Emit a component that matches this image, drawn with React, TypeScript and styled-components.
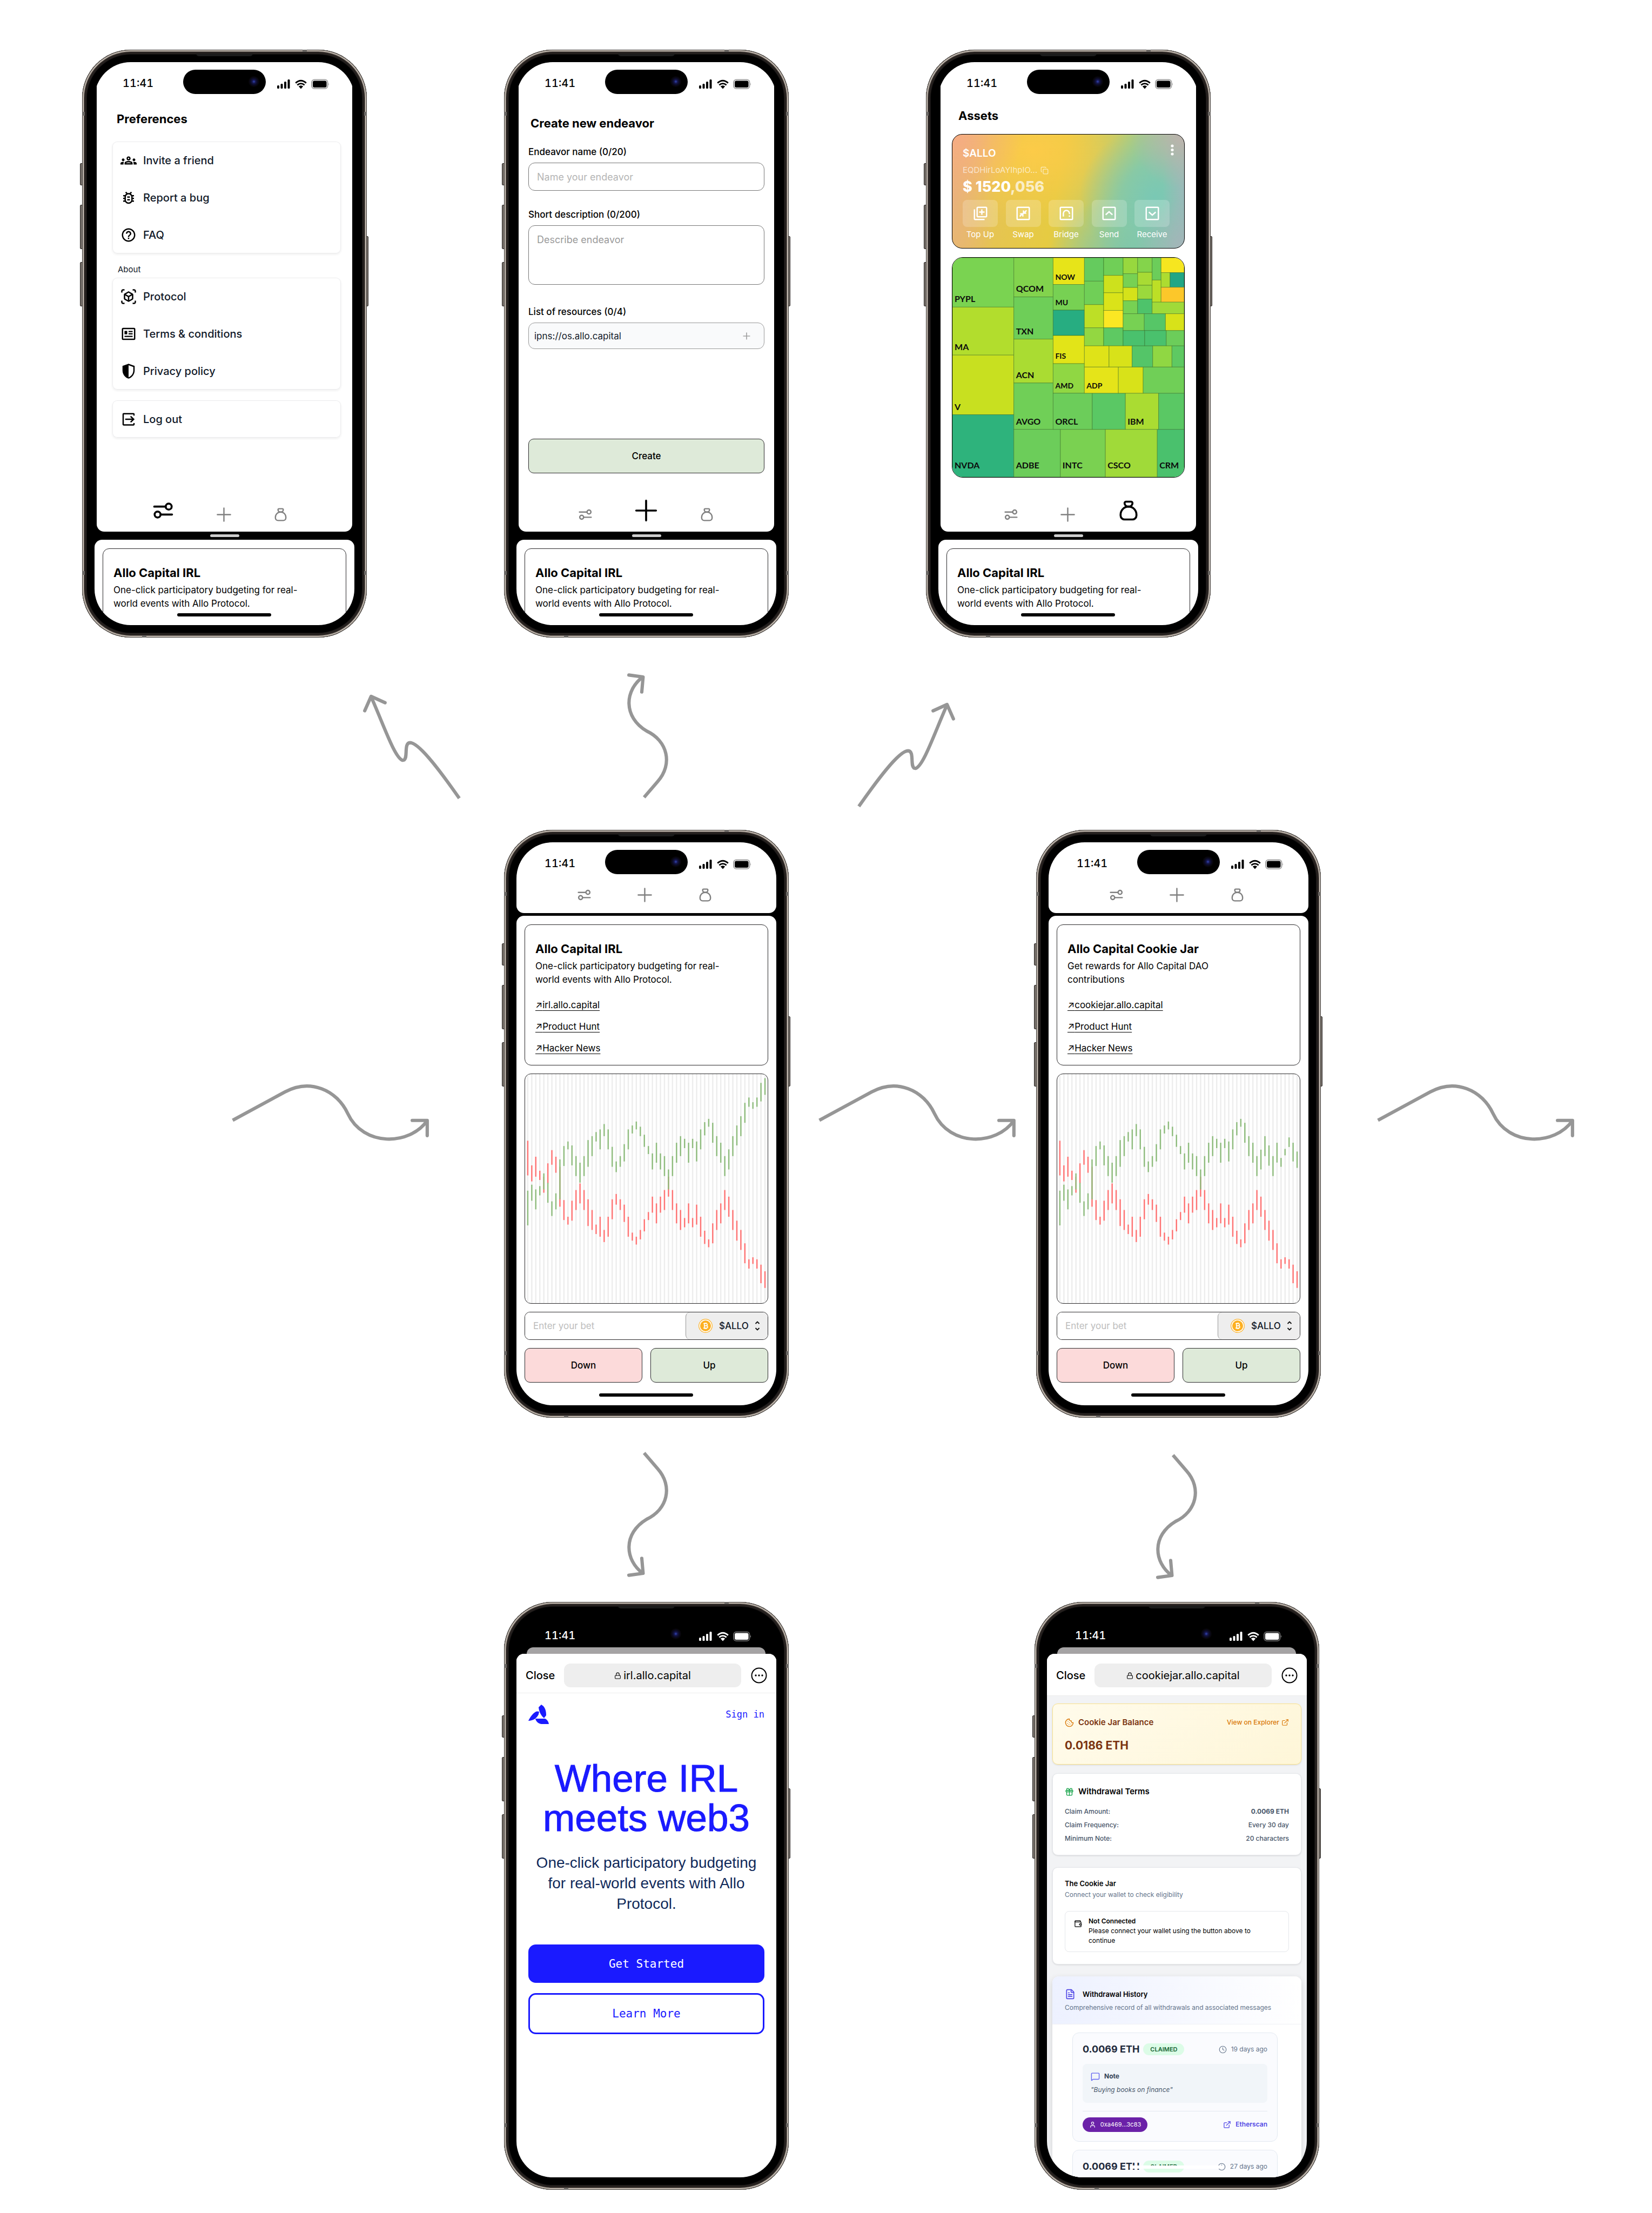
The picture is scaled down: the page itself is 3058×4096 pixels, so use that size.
import React from 'react';
import styled, { createGlobalStyle, css } from 'styled-components';
import {
  Clock,
  Cookie,
  Copy,
  ExternalLink,
  FileText,
  Gift,
  Lock,
  MessageSquare,
  Plus,
  User,
  Wallet,
} from 'lucide-react';
import {
  MdHelpOutline,
  MdOutlineBugReport,
  MdOutlineGroups,
  MdOutlineLibraryAdd,
  MdOutlineViewInAr,
} from 'react-icons/md';

const sans = `Inter, "Liberation Sans", sans-serif`;
const grotesk = `"Liberation Sans", Arial, sans-serif`;
const mono = `"DejaVu Sans Mono", monospace`;
const ink = '#111928';
const line = '#2b2a2c';
const blue = '#1a1aff';

const GlobalStyle = createGlobalStyle`
  *, *::before, *::after { box-sizing: border-box; }
  body { margin: 0; background: #fff; color: #000; font-family: ${sans}; }
  h1, h2, h3, p, ul, dl, dd { margin: 0; padding: 0; }
  ul { list-style: none; }
  button, input, textarea, select { font: inherit; color: inherit; margin: 0; }
  svg { display: block; flex: none; }
`;

/* ---------- board ---------- */

const Board = styled.main`
  min-height: 100vh;
  padding: 92px 0 43px;
  overflow: hidden;
`;

const PhoneRow = styled.section<{ $columns: string; $start: number }>`
  display: grid;
  grid-template-columns: ${(p) => p.$columns};
  padding-left: ${(p) => p.$start}px;
  align-items: start;
`;

const ArrowRow = styled.div<{ $height: number; $start: number }>`
  display: flex;
  align-items: flex-start;
  height: ${(p) => p.$height}px;
  padding-left: ${(p) => p.$start}px;
`;

const Arrow = styled.svg<{ $top: number; $gap?: number }>`
  margin-top: ${(p) => p.$top}px;
  margin-left: ${(p) => p.$gap ?? 0}px;
  fill: none;
  stroke: #969696;
  stroke-width: 10;
  stroke-linejoin: round;
`;

function WaveArrow() {
  return (
    <Arrow $top={469} width="370" height="111" viewBox="692 3250 600 180" aria-hidden="true">
      <path d="M698 3361L855 3276C930 3235 1010 3270 1043 3340C1090 3442 1230 3437 1282 3362" />
      <path strokeLinecap="round" d="M1237 3361.500H1282V3407" />
    </Arrow>
  );
}

function CurlArrow({ top, gap, down }: { top: number; gap?: number; down?: boolean }) {
  return (
    <Arrow $top={top} $gap={gap} width="89" height="244" viewBox="1870 2010 145 395" aria-hidden="true">
      <g transform={down ? 'translate(0 4415) scale(1 -1)' : undefined}>
        <path d="M1934 2393L1975 2345C2022 2292 2004 2222 1942 2193C1870 2150 1875 2070 1931 2029" />
        <path strokeLinecap="round" d="M1888 2024L1931 2030L1927 2075" />
      </g>
    </Arrow>
  );
}

function ZigArrow({ top, gap, mirrored }: { top: number; gap?: number; mirrored?: boolean }) {
  return (
    <Arrow $top={top} $gap={gap} width="188" height="204" viewBox="1085 2075 305 330" aria-hidden="true">
      <g transform={mirrored ? 'translate(2475 0) scale(-1 1)' : undefined}>
        <path d="M1114 2090C1150 2170 1185 2275 1209 2281C1228 2281 1210 2229 1231 2228C1260 2228 1330 2325 1379 2395" />
        <path strokeLinecap="round" d="M1095 2132L1114 2089L1156 2108" />
      </g>
    </Arrow>
  );
}

/* ---------- phone shell ---------- */

const Body = styled.article`
  position: relative;
  width: 527px;
  height: 1088px;
  padding: 23px;
  border-radius: 90px;
  background: #000;
  box-shadow: inset 0 0 0 1px #3b3835, inset 0 0 0 3px #c3bab1, inset 0 0 0 4px #6f6760,
    inset 0 0 0 8px #26211f, inset 0 0 0 9px #141212;
`;

const SideKey = styled.span<{ $side: 'left' | 'right'; $top: number; $height: number }>`
  position: absolute;
  z-index: -1;
  top: ${(p) => p.$top}px;
  ${(p) => p.$side}: ${(p) => (p.$side === 'left' ? -4 : -3)}px;
  width: 8px;
  height: ${(p) => p.$height}px;
  border: 1px solid #2a2624;
  border-radius: 2px;
  background: #77706a;
`;

const Band = styled.span<{ $x?: 'left' | 'right'; $y?: 'top' | 'bottom'; $at: number }>`
  position: absolute;
  background: #6b6865;
  ${(p) =>
    p.$x
      ? css`
          ${p.$x}: 0;
          top: ${p.$at}px;
          width: 5px;
          height: 7px;
        `
      : css`
          ${p.$y === 'top' ? 'top' : 'bottom'}: 0;
          left: ${p.$at}px;
          width: 8px;
          height: 4px;
        `}
`;

const Earpiece = styled.span`
  position: absolute;
  top: 7px;
  left: 211px;
  width: 105px;
  height: 5px;
  border-radius: 0 0 5px 5px;
  background: #1c1c1c;
`;

const Screen = styled.div`
  position: relative;
  display: flex;
  flex-direction: column;
  height: 100%;
  border-radius: 67px;
  background: #000;
  overflow: hidden;
`;

const StatusBar = styled.div<{ $light?: boolean }>`
  position: absolute;
  z-index: 2;
  inset: 14px 0 auto 0;
  display: flex;
  align-items: center;
  height: 45px;
  padding: 0 46px 0 52px;
  color: ${(p) => (p.$light ? '#fff' : '#000')};
`;

const Time = styled.span`
  width: 112px;
  padding-top: 5px;
  font-size: 20px;
  line-height: 24px;
  font-weight: 500;
  font-variant-numeric: tabular-nums;
`;

const Island = styled.span`
  position: relative;
  width: 153px;
  height: 45px;
  border-radius: 23px;
  background: #000;
  &::after {
    content: '';
    position: absolute;
    top: 12px;
    right: 12px;
    width: 20px;
    height: 20px;
    border-radius: 50%;
    background: radial-gradient(circle, #2c3a9a 0 1px, #16174f 3px, #0b0b26 6px, #070509 9px);
  }
`;

const Signals = styled.svg`
  margin: 8px 0 0 auto;
`;

const HomeBar = styled.span<{ $light?: boolean }>`
  position: absolute;
  z-index: 2;
  bottom: 16px;
  left: 50%;
  width: 174px;
  height: 6px;
  margin-left: -88px;
  border-radius: 3px;
  background: ${(p) => (p.$light ? '#fff' : '#000')};
`;

function Phone({ dark, children }: { dark?: boolean; children: React.ReactNode }) {
  return (
    <Body>
      <SideKey $side="left" $top={210} $height={41} />
      <SideKey $side="left" $top={287} $height={82} />
      <SideKey $side="left" $top={393} $height={82} />
      <SideKey $side="right" $top={345} $height={130} />
      <Band $y="top" $at={408} />
      <Band $y="bottom" $at={111} />
      <Band $x="left" $at={115} />
      <Band $x="right" $at={115} />
      <Band $x="left" $at={965} />
      <Band $x="right" $at={965} />
      <Earpiece />
      <Screen>
        {children}
        <StatusBar $light={dark}>
          <Time>11:41</Time>
          <Island />
          <Signals width="97" height="20" viewBox="0 0 97 20" fill="currentColor" aria-hidden="true">
            <rect x="0" y="12" width="4" height="6" rx="1.500" />
            <rect x="6.500" y="9" width="4" height="9" rx="1.500" />
            <rect x="13" y="5" width="4" height="13" rx="1.500" />
            <rect x="19.500" y="1" width="4" height="17" rx="1.500" />
            <path d="M44 18.500L39.800 13.800Q44 10.600 48.200 13.800Z" />
            <g fill="none" stroke="currentColor" strokeWidth="2.800">
              <path d="M37.300 11.400Q44 5.800 50.700 11.400" />
              <path d="M34.200 7.600Q44 -1 53.800 7.600" />
            </g>
            <rect x="64" y="1.500" width="29.500" height="16.500" rx="5" fill="none" stroke="#a3a3a3" strokeWidth="2" opacity={dark ? 0.6 : 1} />
            <rect x="66" y="3.500" width="25.500" height="12.500" rx="3" />
            <path d="M95 7.500q2 2.250 0 4.500z" fill="#a3a3a3" />
          </Signals>
        </StatusBar>
        <HomeBar $light={dark} />
      </Screen>
    </Body>
  );
}

/* ---------- shared app parts ---------- */

const Pane = styled.section<{ $inset?: boolean }>`
  display: flex;
  flex-direction: column;
  flex: 1;
  min-height: 0;
  margin: 0 ${(p) => (p.$inset ? 4 : 0)}px;
  border-radius: 0 0 14px 14px;
  background: #fff;
`;

const Feed = styled.section<{ $peek?: boolean }>`
  display: flex;
  flex-direction: column;
  gap: 15px;
  flex: none;
  height: ${(p) => (p.$peek ? 158 : 906)}px;
  padding: 16px 15px 0;
  border-radius: 14px 14px 0 0;
  background: #fff;
  overflow: hidden;
`;

const Grip = styled.div`
  flex: none;
  display: flex;
  align-items: center;
  justify-content: center;
  height: 15px;
  &::before {
    content: '';
    width: 54px;
    height: 5px;
    border-radius: 3px;
    background: #cfcfcf;
  }
`;

const Seam = styled.div`
  flex: none;
  height: 5px;
`;

const TabBar = styled.nav<{ $gap: number; $pad: string }>`
  display: grid;
  grid-template-columns: 1fr auto 1fr;
  align-items: end;
  gap: ${(p) => p.$gap}px;
  margin-top: auto;
  padding: ${(p) => p.$pad};
  & > :first-child { justify-self: end; }
`;

const Tab = styled.button<{ $on?: boolean }>`
  width: ${(p) => (p.$on ? 44 : 29)}px;
  height: ${(p) => (p.$on ? 44 : 29)}px;
  padding: 0;
  border: 0;
  background: none;
  color: ${(p) => (p.$on ? '#000' : '#808080')};
  svg {
    width: 100%;
    height: 100%;
    fill: none;
    stroke: currentColor;
    stroke-width: 2;
    stroke-linecap: round;
    stroke-linejoin: round;
  }
`;

function Tabs({ active, top }: { active?: number; top?: boolean }) {
  return (
    <TabBar $gap={top ? 83 : 76} $pad={top ? '0 7px 19px 0' : '0 2px 17px 0'} aria-label="Sections">
      <Tab type="button" $on={active === 0} aria-label="Preferences">
        <svg viewBox="0 0 24 24">
          <path d="M3 8h11.500M21 16H9.500" />
          <circle cx="17.600" cy="8" r="3" />
          <circle cx="6.400" cy="16" r="3" />
        </svg>
      </Tab>
      <Tab type="button" $on={active === 1} aria-label="Create">
        <svg viewBox="0 0 24 24">
          <path d="M12 2v20M2 12h20" />
        </svg>
      </Tab>
      <Tab type="button" $on={active === 2} aria-label="Assets">
        <svg viewBox="0 0 24 24">
          <path d="M9.500 3h5a1.500 1.500 0 0 1 1.500 1.500a3.500 3.500 0 0 1-3.500 3.500h-1a3.500 3.500 0 0 1-3.500-3.500a1.500 1.500 0 0 1 1.500-1.500z" />
          <path d="M4 17v-1a8 8 0 1 1 16 0v1a4 4 0 0 1-4 4h-8a4 4 0 0 1-4-4z" />
        </svg>
      </Tab>
    </TabBar>
  );
}

const Title = styled.h2<{ $indent?: number; $after?: number }>`
  padding-left: ${(p) => p.$indent ?? 0}px;
  margin-bottom: ${(p) => p.$after ?? 0}px;
  font-size: 22px;
  line-height: 28px;
  font-weight: 700;
`;

const InfoCard = styled.section`
  flex: none;
  min-height: 261px;
  padding: 30px 19px 0;
  border: 1px solid ${line};
  border-radius: 12px;
`;

const InfoText = styled.p`
  max-width: 360px;
  font-size: 17px;
  line-height: 25px;
`;

const LinkList = styled.ul`
  display: grid;
  gap: 16px;
  margin-top: 22px;
  font-size: 17px;
  line-height: 24px;
  a {
    color: #000;
    text-decoration: underline;
    text-decoration-thickness: 1px;
    text-underline-offset: 4px;
  }
`;

function Info({ title, text, links = [] }: { title: string; text: string; links?: string[] }) {
  return (
    <InfoCard>
      <Title $after={6}>{title}</Title>
      <InfoText>{text}</InfoText>
      {links.length > 0 && (
        <LinkList>
          {links.map((l) => (
            <li key={l}>
              <a href="#open">↗{l}</a>
            </li>
          ))}
        </LinkList>
      )}
    </InfoCard>
  );
}

const irlText = 'One-click participatory budgeting for real-world events with Allo Protocol.';

function Drawer() {
  return (
    <>
      <Grip />
      <Feed $peek>
        <Info title="Allo Capital IRL" text={irlText} />
      </Feed>
    </>
  );
}

/* ---------- preferences ---------- */

const PrefsBody = styled.div`
  padding: 91px 21px 0 29px;
`;

const Group = styled.ul`
  border-radius: 9px;
  box-shadow: inset 0 0 0 1px #ececee, 0 2px 4px rgba(0, 0, 0, 0.07);
  & + & { margin-top: 20px; }
`;

const Item = styled.button`
  display: flex;
  align-items: center;
  gap: 12px;
  width: 100%;
  height: 69px;
  padding: 0 15px;
  border: 0;
  background: none;
  color: ${ink};
  font-size: 20px;
  line-height: 24px;
  font-weight: 500;
  svg { width: 30px; height: 30px; color: #000; }
`;

const GroupLabel = styled.h3`
  margin: 20px 0 5px;
  padding-left: 10px;
  color: ${ink};
  font-size: 15px;
  line-height: 20px;
  font-weight: 400;
`;

const NewsIcon = () => (
  <svg viewBox="0 0 24 24" fill="currentColor" aria-hidden="true">
    <path fillRule="evenodd" d="M4 3h16a2 2 0 0 1 2 2v14a2 2 0 0 1-2 2H4a2 2 0 0 1-2-2V5a2 2 0 0 1 2-2zm0 2v14h16V5z" />
    <path d="M6 7.500h4v5H6zM12 7.500h6v1.800h-6zM12 11h6v1.800h-6zM6 14.800h12v1.800H6z" />
  </svg>
);

const ShieldIcon = () => (
  <svg viewBox="0 0 24 24" fill="currentColor" aria-hidden="true">
    <path d="M12 1L3 4.200V11c0 5.500 3.800 10.600 9 12 5.200-1.400 9-6.500 9-12V4.200zM12 3.200l7 2.500V11c0 4.500-3 8.700-7 9.900z" fillRule="evenodd" />
  </svg>
);

const ExitIcon = () => (
  <svg viewBox="0 0 24 24" fill="none" stroke="currentColor" strokeWidth="2" aria-hidden="true">
    <path d="M20 6.500V4.500a.8.8 0 0 0-.8-.8H4.800a.8.8 0 0 0-.8.8v15a.8.8 0 0 0 .8.8h14.400a.8.8 0 0 0 .8-.8v-2M7 12h12.500M15 7.700l4.500 4.300-4.500 4.300" />
  </svg>
);

function Preferences() {
  return (
    <Phone>
      <Pane $inset>
        <PrefsBody>
          <Title $indent={8} $after={28}>Preferences</Title>
          <Group>
            <li><Item type="button"><MdOutlineGroups />Invite a friend</Item></li>
            <li><Item type="button"><MdOutlineBugReport />Report a bug</Item></li>
            <li><Item type="button"><MdHelpOutline />FAQ</Item></li>
          </Group>
          <GroupLabel>About</GroupLabel>
          <Group>
            <li><Item type="button"><MdOutlineViewInAr />Protocol</Item></li>
            <li><Item type="button"><NewsIcon />Terms &amp; conditions</Item></li>
            <li><Item type="button"><ShieldIcon />Privacy policy</Item></li>
          </Group>
          <Group>
            <li><Item type="button"><ExitIcon />Log out</Item></li>
          </Group>
        </PrefsBody>
        <Tabs active={0} />
      </Pane>
      <Drawer />
    </Phone>
  );
}

/* ---------- create endeavor ---------- */

const CreateForm = styled.form`
  display: flex;
  flex-direction: column;
  flex: 1;
  padding: 99px 18px 47px;
`;

const Field = styled.div<{ $after: number }>`
  display: flex;
  flex-direction: column;
  gap: 9px;
  margin-bottom: ${(p) => p.$after}px;
  label {
    font-size: 17px;
    line-height: 22px;
    font-weight: 500;
  }
`;

const fieldBox = css`
  width: 100%;
  border: 1px solid #777;
  border-radius: 12px;
  background: #fff;
  outline: none;
  resize: none;
`;

const TextInput = styled.input`
  ${fieldBox}
  height: 52px;
  padding: 0 15px;
  font-size: 18px;
  &::placeholder { color: #b5b5b5; opacity: 1; }
`;

const TextBox = styled.textarea`
  ${fieldBox}
  display: block;
  height: 110px;
  padding: 14px 15px;
  font-size: 18px;
  line-height: 24px;
  &::placeholder { color: #9a9a9a; opacity: 1; }
`;

const ResourceBox = styled.div`
  ${fieldBox}
  display: flex;
  align-items: center;
  height: 49px;
  padding: 0 22px 0 10px;
  border-color: #999;
  background: #f9fafb;
  input {
    flex: 1;
    min-width: 0;
    padding: 0;
    border: 0;
    background: none;
    color: ${ink};
    font-size: 17px;
  }
  button {
    padding: 0;
    border: 0;
    background: none;
    color: #a0a0a0;
  }
`;

const ActionButton = styled.button<{ $tone: 'up' | 'down' }>`
  flex: 1;
  height: 64px;
  border: 1px solid ${line};
  border-radius: 10px;
  background: ${(p) => (p.$tone === 'up' ? '#deead9' : '#fcdada')};
  font-size: 17px;
  font-weight: 500;
`;

const FormFoot = styled.div`
  display: flex;
  margin-top: auto;
`;

function CreateEndeavor() {
  return (
    <Phone>
      <Pane $inset>
        <CreateForm>
          <Title $indent={4} $after={28}>Create new endeavor</Title>
          <Field $after={33}>
            <label htmlFor="name">Endeavor name (0/20)</label>
            <TextInput id="name" placeholder="Name your endeavor" />
          </Field>
          <Field $after={39}>
            <label htmlFor="about">Short description (0/200)</label>
            <TextBox id="about" placeholder="Describe endeavor" />
          </Field>
          <Field $after={0}>
            <label htmlFor="resource">List of resources (0/4)</label>
            <ResourceBox>
              <input id="resource" defaultValue="ipns://os.allo.capital" />
              <button type="button" aria-label="Add resource"><Plus size={20} strokeWidth={2} /></button>
            </ResourceBox>
          </Field>
          <FormFoot>
            <ActionButton type="button" $tone="up">Create</ActionButton>
          </FormFoot>
        </CreateForm>
        <Tabs active={1} />
      </Pane>
      <Drawer />
    </Phone>
  );
}

/* ---------- assets ---------- */

const AssetsBody = styled.div`
  padding: 85px 21px 0;
`;

const WalletCard = styled.section`
  position: relative;
  height: 212px;
  margin-bottom: 16px;
  padding: 23px 27px 0 19px;
  border: 1px solid #000;
  border-radius: 19px;
  color: #fff;
  background:
    radial-gradient(circle at 100% 0%, rgba(190, 178, 172, 1) 0, rgba(180, 185, 175, 0) 100px),
    radial-gradient(circle at 100% 100%, rgba(165, 180, 185, 1) 0, rgba(165, 180, 185, 0) 90px),
    radial-gradient(ellipse 40px 160px at 100% 50%, rgba(158, 184, 186, 0.9) 0, rgba(158, 184, 186, 0) 100%),
    radial-gradient(ellipse 140px 130px at 375px 115px, #7ac8b4 0, rgba(122, 200, 180, 0.7) 45%, rgba(122, 200, 180, 0) 100%),
    radial-gradient(ellipse 150px 110px at 330px 220px, #80c6a8 0, rgba(128, 198, 168, 0) 100%),
    radial-gradient(ellipse 130px 130px at 0 0, #f6ab85 0, rgba(246, 171, 133, 0) 100%),
    radial-gradient(ellipse 80px 260px at 0 120px, #e9b27c 0, rgba(233, 178, 124, 0) 100%),
    radial-gradient(ellipse 200px 130px at 150px 30px, #fccb48 0, rgba(252, 203, 72, 0) 100%),
    linear-gradient(100deg, #e5bd62 0, #e6cb42 45%, #a8cc84 75%, #8cc4b4 100%);
`;

const MoreButton = styled.button`
  position: absolute;
  top: 16px;
  right: 17px;
  width: 10px;
  height: 26px;
  padding: 0;
  border: 0;
  background: none;
`;

const Token = styled.h3`
  font-size: 19px;
  line-height: 24px;
  font-weight: 600;
`;

const Address = styled.p`
  display: flex;
  align-items: center;
  gap: 6px;
  margin-top: 10px;
  color: rgba(255, 255, 255, 0.65);
  font-size: 15px;
  line-height: 18px;
`;

const Amount = styled.p`
  margin: 5px 0 7px;
  font-size: 27px;
  line-height: 34px;
  font-weight: 800;
  span { color: rgba(255, 255, 255, 0.7); }
`;

const Actions = styled.ul`
  display: grid;
  grid-template-columns: repeat(5, 65px);
  justify-content: space-between;
  button {
    display: flex;
    flex-direction: column;
    align-items: center;
    gap: 5px;
    width: 100%;
    padding: 0;
    border: 0;
    background: none;
    font-size: 15px;
    line-height: 18px;
  }
`;

const Tile = styled.span`
  display: grid;
  place-items: center;
  width: 100%;
  height: 50px;
  border-radius: 8px;
  background: rgba(255, 255, 255, 0.2);
  svg { width: 30px; height: 30px; }
`;

const boxed = (d: string) => (
  <svg viewBox="0 0 24 24" fill="none" stroke="currentColor" strokeWidth="2" aria-hidden="true">
    <rect x="3" y="3" width="18" height="18" rx="1" />
    <path d={d} />
  </svg>
);

const actions: [string, React.ReactNode][] = [
  ['Top Up', <MdOutlineLibraryAdd key="t" />],
  ['Swap', boxed('M7 16.500l4-4M7.500 12.500h4v4M17 7.500l-4 4M16.500 11.500h-4v-4')],
  ['Bridge', boxed('M7.500 16.500V12a4.500 4.500 0 0 1 9 0v1M16.500 15v2')],
  ['Send', boxed('M7 14l5-4.500 5 4.500')],
  ['Receive', boxed('M7 10l5 4.500 5-4.500')],
];

type Cell = [number, number, number, number, string, string?, number?];

/* Cell edges on a 1215 x 795 grid. */
const cells: Cell[] = [
  [0, 0, 322, 179, '#7ad351', 'PYPL'],
  [0, 179, 322, 353, '#b2dd2d', 'MA'],
  [0, 353, 322, 569, '#c8e020', 'V'],
  [0, 569, 322, 795, '#2eb37c', 'NVDA'],
  [322, 0, 528, 142, '#82d34d', 'QCOM'],
  [322, 142, 528, 295, '#6ece58', 'TXN'],
  [322, 295, 528, 454, '#aadc32', 'ACN'],
  [322, 454, 528, 622, '#70cf57', 'AVGO'],
  [322, 622, 566, 795, '#6ccd5a', 'ADBE'],
  [566, 622, 802, 795, '#7ad151', 'INTC'],
  [802, 622, 1074, 795, '#a0da39', 'CSCO'],
  [1074, 622, 1215, 795, '#4ac16d', 'CRM'],
  [528, 0, 692, 97, '#e7e419', 'NOW', 14],
  [528, 97, 692, 190, '#77d153', 'MU', 14],
  [528, 190, 692, 282, '#27ad81'],
  [528, 282, 692, 384, '#e2e418', 'FIS', 14],
  [528, 384, 692, 491, '#90d743', 'AMD', 14],
  [528, 491, 733, 622, '#6ccd5a', 'ORCL'],
  [733, 491, 907, 622, '#5ac864'],
  [907, 491, 1081, 622, '#aadc32', 'IBM'],
  [1081, 491, 1215, 622, '#5ac864'],
  [692, 396, 870, 491, '#e5e419', 'ADP', 14],
  [870, 396, 1000, 491, '#d8e219'],
  [1000, 396, 1215, 491, '#70cf57'],
  [692, 319, 821, 396, '#dfe318'],
  [821, 319, 942, 396, '#d8e219'],
  [942, 319, 1050, 396, '#54c568'],
  [1050, 319, 1151, 396, '#90d743'],
  [1151, 319, 1215, 396, '#5ec962'],
  [692, 0, 793, 85, '#65cb5e'],
  [692, 85, 793, 170, '#70cf57'],
  [692, 170, 793, 254, '#bddf26'],
  [692, 254, 793, 319, '#93d741'],
  [793, 0, 895, 64, '#70cf57'],
  [793, 64, 895, 127, '#cde11d'],
  [793, 127, 895, 191, '#dae319'],
  [793, 191, 895, 254, '#fbe723'],
  [793, 254, 895, 319, '#5ec962'],
  [895, 0, 971, 58, '#98d83e'],
  [895, 58, 971, 108, '#77d153'],
  [895, 108, 971, 156, '#d5e21a'],
  [895, 156, 971, 203, '#77d153'],
  [971, 0, 1047, 53, '#84d44b'],
  [971, 53, 1047, 100, '#a8db34'],
  [971, 100, 1047, 150, '#9bd93c'],
  [971, 150, 1047, 203, '#4ec36b'],
  [1047, 0, 1094, 81, '#6ccd5a'],
  [1047, 81, 1094, 161, '#bddf26'],
  [1094, 0, 1215, 54, '#f6e620'],
  [1094, 54, 1141, 107, '#addc30'],
  [1141, 54, 1215, 107, '#21a685'],
  [1094, 107, 1215, 161, '#fcc72a'],
  [1047, 161, 1215, 203, '#a0da39'],
  [895, 203, 1006, 264, '#77d153'],
  [1006, 203, 1117, 264, '#56c667'],
  [1117, 203, 1215, 264, '#d8e219'],
  [895, 264, 1008, 319, '#4ac16d'],
  [1008, 264, 1121, 319, '#4ac16d'],
  [1121, 264, 1215, 319, '#6ccd5a'],
];

const MapFrame = styled.figure`
  margin: 0;
  border: 1px solid #000;
  border-radius: 20px;
  overflow: hidden;
  svg { width: 100%; height: auto; }
  text { font-family: Lato, sans-serif; font-weight: 700; fill: #0b0b0b; }
`;

function TreeMap() {
  const kx = 428 / 1215;
  const ky = 405 / 795;
  return (
    <MapFrame>
      <svg viewBox="0 0 428 405" role="img" aria-label="Holdings by weight">
        {cells.map(([x0, y0, x1, y1, fill], i) => (
          <rect
            key={i}
            x={x0 * kx}
            y={y0 * ky}
            width={(x1 - x0) * kx}
            height={(y1 - y0) * ky}
            fill={fill}
            stroke="rgba(40,90,20,.45)"
            strokeWidth="1"
          />
        ))}
        {cells.map(([x0, , , y1, , label, size = 16]) =>
          label ? (
            <text key={label} x={x0 * kx + 4} y={y1 * ky - (y1 === 795 ? 16 : 9)} fontSize={size}>{label}</text>
          ) : null,
        )}
      </svg>
    </MapFrame>
  );
}

function Assets() {
  return (
    <Phone>
      <Pane $inset>
        <AssetsBody>
          <Title $indent={12} $after={20}>Assets</Title>
          <WalletCard>
            <MoreButton type="button" aria-label="More">
              <svg width="10" height="26" viewBox="0 0 10 26" fill="#fff">
                <circle cx="5" cy="5" r="2.600" /><circle cx="5" cy="12.500" r="2.600" /><circle cx="5" cy="20" r="2.600" />
              </svg>
            </MoreButton>
            <Token>$ALLO</Token>
            <Address>EQDHirLoAYIhpIO...<Copy size={15} /></Address>
            <Amount>$ 1520<span>,056</span></Amount>
            <Actions>
              {actions.map(([label, icon]) => (
                <li key={label}>
                  <button type="button"><Tile>{icon}</Tile>{label}</button>
                </li>
              ))}
            </Actions>
          </WalletCard>
          <TreeMap />
        </AssetsBody>
        <Tabs active={2} />
      </Pane>
      <Drawer />
    </Phone>
  );
}

/* ---------- betting ---------- */

const shared: [number, number][] = [
  [788, 1009], [750, 852], [780, 907], [759, 818], [678, 780], [738, 865], [856, 949], [805, 907],
  [589, 843], [504, 631], [475, 525], [500, 627], [568, 695], [610, 737], [568, 695], [466, 636],
  [441, 568], [415, 475], [398, 525], [364, 441], [398, 525], [509, 636], [602, 670], [568, 636],
  [492, 602], [398, 525], [373, 424], [348, 398], [381, 441], [432, 509], [504, 555], [551, 653],
  [483, 610], [551, 653], [568, 695], [653, 780], [568, 695], [483, 610], [441, 568], [458, 517],
  [483, 610], [458, 517], [475, 602], [398, 525], [352, 436], [331, 381], [356, 483], [441, 568],
  [483, 610], [568, 695],
];
const rally: [number, number][] = [
  ...shared,
  [525, 653], [441, 568], [373, 500], [314, 441], [229, 356], [195, 254], [225, 267], [195, 254],
  [102, 220], [72, 178],
];
const flat: [number, number][] = [
  ...shared,
  [527, 653], [441, 568], [500, 629], [568, 695], [483, 609], [580, 636], [522, 563], [449, 510],
  [483, 602], [539, 643],
];

const ChartFrame = styled.figure`
  flex: none;
  height: 426px;
  margin: 0;
  border: 1px solid ${line};
  border-radius: 12px;
  overflow: hidden;
  svg { width: 100%; height: 100%; }
`;

function BetChart({ up }: { up: [number, number][] }) {
  const x = (i: number) => 44 + i * 24.27;
  return (
    <ChartFrame>
      <svg viewBox="32 46 1464 1458" preserveAspectRatio="none" role="img" aria-label="Up and down bets">
        {rally.map((_, i) => (
          <rect key={i} x={x(i)} y="46" width="8" height="1458" fill="#ededed" />
        ))}
        {rally.map(([a, b], i) => (
          <rect key={i} x={x(i)} y={1479 - b} width="8" height={b - a} fill="#ff7575" />
        ))}
        {up.map(([a, b], i) => (
          <rect key={i} x={x(i)} y={a} width="8" height={b - a} fill="#90bd7f" />
        ))}
      </svg>
    </ChartFrame>
  );
}

const BetField = styled.div`
  display: flex;
  flex: none;
  height: 52px;
  border: 1px solid ${line};
  border-radius: 10px;
  overflow: hidden;
  & > input {
    flex: 1;
    min-width: 0;
    padding: 0 15px;
    border: 0;
    outline: none;
    background: #fff;
    font-size: 17px;
    &::placeholder { color: #bdbdbd; opacity: 1; }
  }
`;

const TokenPicker = styled.label`
  display: flex;
  align-items: center;
  width: 152px;
  padding: 0 14px 0 23px;
  border-left: 1px solid #999;
  border-radius: 8px 0 0 8px;
  background: #eee;
  select {
    flex: 1;
    min-width: 0;
    padding: 0 0 0 12px;
    border: 0;
    background: none;
    appearance: none;
    color: ${ink};
    font-size: 17px;
    font-weight: 500;
  }
`;

const Choices = styled.div`
  display: flex;
  flex: none;
  gap: 15px;
`;

function Bet({ title, text, site, up }: { title: string; text: string; site: string; up: [number, number][] }) {
  return (
    <Phone>
      <Pane>
        <Tabs top />
      </Pane>
      <Seam />
      <Feed>
        <Info title={title} text={text} links={[site, 'Product Hunt', 'Hacker News']} />
        <BetChart up={up} />
        <BetField>
          <input aria-label="Bet" placeholder="Enter your bet" />
          <TokenPicker>
            <svg width="26" height="26" viewBox="0 0 26 26" fill="none" aria-hidden="true">
              <circle cx="13" cy="13" r="12.300" fill="#fff" stroke="#fdb022" strokeWidth="1.200" />
              <circle cx="13" cy="13" r="10" fill="#fdb022" />
              <path
                d="M9 8.800h5.200a2 2 0 0 1 0 4.100H10.500M10.500 12.900h4.300a2.100 2.100 0 0 1 0 4.200H9M10.800 8.800v8.300M11.800 7v1.800M14.200 7v1.800M11.800 17.100V19M14.200 17.100V19"
                stroke="#fff"
                strokeWidth="1.600"
              />
            </svg>
            <select aria-label="Token"><option>$ALLO</option></select>
            <svg width="10" height="20" viewBox="0 0 10 20" fill="none" stroke="#111" strokeWidth="1.800" aria-hidden="true">
              <path d="M1.500 6L5 2.500 8.500 6M1.500 14L5 17.500 8.500 14" />
            </svg>
          </TokenPicker>
        </BetField>
        <Choices>
          <ActionButton type="button" $tone="down">Down</ActionButton>
          <ActionButton type="button" $tone="up">Up</ActionButton>
        </Choices>
      </Feed>
    </Phone>
  );
}

/* ---------- in-app browser ---------- */

const BackSheet = styled.div`
  flex: none;
  height: 26px;
  margin: 61px 20px -14px 19px;
  border-radius: 12px 12px 0 0;
  background: #a5a3a4;
`;

const Sheet = styled.section<{ $bg: string }>`
  position: relative;
  flex: 1;
  min-height: 0;
  border-radius: 14px 14px 0 0;
  background: ${(p) => p.$bg};
  overflow: hidden;
`;

const AddressBar = styled.header<{ $height: number }>`
  display: flex;
  align-items: flex-start;
  height: ${(p) => p.$height}px;
  padding: 18px 17px 0;
  border-bottom: 1px solid #ececec;
  background: #fff;
`;

const BarButton = styled.button<{ $width: number; $end?: boolean }>`
  display: flex;
  align-items: center;
  justify-content: ${(p) => (p.$end ? 'flex-end' : 'flex-start')};
  width: ${(p) => p.$width}px;
  height: 44px;
  padding: 0;
  border: 0;
  background: none;
  font-size: 20px;
  font-weight: 500;
`;

const Url = styled.button`
  display: flex;
  align-items: center;
  justify-content: center;
  gap: 4px;
  flex: 1;
  height: 44px;
  padding: 0;
  border: 0;
  border-radius: 12px;
  background: #eee;
  font-size: 20px;
  font-weight: 400;
`;

function Browser({ url, bar, bg, children }: { url: string; bar: number; bg: string; children: React.ReactNode }) {
  return (
    <Phone dark>
      <BackSheet />
      <Sheet $bg={bg}>
        <AddressBar $height={bar}>
          <BarButton type="button" $width={71}>Close</BarButton>
          <Url type="button"><Lock size={13} strokeWidth={2} />{url}</Url>
          <BarButton type="button" $width={48} $end aria-label="More">
            <svg width="30" height="30" viewBox="0 0 30 30" fill="none" aria-hidden="true">
              <circle cx="15" cy="15" r="13.500" stroke="#000" strokeWidth="2" />
              <g fill="#000"><circle cx="9" cy="15" r="1.700" /><circle cx="15" cy="15" r="1.700" /><circle cx="21" cy="15" r="1.700" /></g>
            </svg>
          </BarButton>
        </AddressBar>
        {children}
      </Sheet>
    </Phone>
  );
}

/* ---------- irl.allo.capital ---------- */

const Landing = styled.div`
  display: flex;
  flex-direction: column;
  padding: 21px 22px 0;
`;

const LandingTop = styled.div`
  display: flex;
  align-items: flex-start;
  justify-content: space-between;
  a {
    margin-top: 7px;
    color: ${blue};
    font-family: ${mono};
    font-size: 17px;
    line-height: 22px;
    text-decoration: none;
  }
`;

const Hero = styled.h1`
  margin-top: 64px;
  color: ${blue};
  font-family: ${grotesk};
  font-size: 71px;
  line-height: 73px;
  font-weight: 400;
  text-align: center;
  -webkit-text-stroke: 1px ${blue};
`;

const Lead = styled.p`
  margin-top: 28px;
  color: #10295a;
  font-family: ${grotesk};
  font-size: 28px;
  line-height: 38px;
  text-align: center;
`;

const Cta = styled.button<{ $outline?: boolean }>`
  height: ${(p) => (p.$outline ? 76 : 71)}px;
  margin-top: ${(p) => (p.$outline ? 19 : 56)}px;
  border: 3px solid ${blue};
  border-radius: 14px;
  background: ${(p) => (p.$outline ? '#fff' : blue)};
  color: ${(p) => (p.$outline ? blue : '#fff')};
  font-family: ${mono};
  font-size: 21px;
`;

function IrlPage() {
  return (
    <Browser url="irl.allo.capital" bar={73} bg="#fff">
      <Landing>
        <LandingTop>
          <svg width="38" height="36" viewBox="0 0 38 36" fill={blue} role="img" aria-label="Allo">
            <path d="M0 30C4 22 10 14 16 12.500L20 13L19 18C16 25 9 30 0 30Z" />
            <path d="M19 5L24 0L28 3C31 7 33 11 33 20L29 25C24 21 20 14 19 5Z" />
            <path d="M13 26L31 26C35 28 37 31 38 36L24 36C18 35 14 31 13 26Z" />
          </svg>
          <a href="#sign-in">Sign in</a>
        </LandingTop>
        <Hero>Where IRL<br />meets web3</Hero>
        <Lead>One-click participatory budgeting for real-world events with Allo Protocol.</Lead>
        <Cta type="button">Get Started</Cta>
        <Cta type="button" $outline>Learn More</Cta>
      </Landing>
    </Browser>
  );
}

/* ---------- cookiejar.allo.capital ---------- */

const Jar = styled.div`
  padding: 14px 10px 0;
  font-size: 12px;
  line-height: 18px;
`;

const Card = styled.section<{ $pad: string; $after: number }>`
  margin-bottom: ${(p) => p.$after}px;
  padding: ${(p) => p.$pad};
  border: 1px solid #e5e7eb;
  border-radius: 10px;
  background: #fff;
  box-shadow: 0 1px 3px rgba(0, 0, 0, 0.12);
`;

const BalanceCard = styled(Card)`
  border-color: #fbe38c;
  background: linear-gradient(135deg, #fffbeb, #fef6d8);
  color: #7b3410;
`;

const Head = styled.div<{ $gap?: number }>`
  display: flex;
  align-items: center;
  gap: ${(p) => p.$gap ?? 8}px;
  a {
    display: flex;
    align-items: center;
    gap: 4px;
    margin-left: auto;
    color: #d97706;
    font-weight: 500;
    text-decoration: none;
  }
`;

const CardTitle = styled.h2<{ $size: number }>`
  font-size: ${(p) => p.$size}px;
  line-height: 20px;
  font-weight: 600;
`;

const Balance = styled.p`
  margin-top: 19px;
  font-size: 21px;
  line-height: 28px;
  font-weight: 700;
`;

const Terms = styled.dl`
  margin-top: 14px;
  color: #475569;
  font-weight: 500;
  line-height: 25px;
  div { display: flex; justify-content: space-between; }
`;

const Muted = styled.p<{ $top: number }>`
  margin-top: ${(p) => p.$top}px;
  color: #64748b;
`;

const Notice = styled.div`
  display: flex;
  gap: 12px;
  height: 76px;
  margin-top: 21px;
  padding: 9px 60px 0 16px;
  border: 1px solid #e5e7eb;
  border-radius: 8px;
  svg { margin-top: 6px; }
  strong { font-weight: 600; }
`;

const History = styled.section`
  border-radius: 12px 12px 0 0;
  background: #fff;
  box-shadow: 0 4px 12px rgba(0, 0, 0, 0.14);
  overflow: hidden;
`;

const HistoryHead = styled.header`
  height: 89px;
  padding: 23px 23px 0;
  border-bottom: 1px solid #eef0f6;
  background: linear-gradient(90deg, #edf1ff, #fff);
`;

const Entries = styled.ul`
  display: grid;
  gap: 15px;
  padding: 15px 44px 0 37px;
`;

const Entry = styled.li`
  height: 202px;
  padding: 18px 18px 0;
  border: 1px solid #e2e8f0;
  border-radius: 12px;
  background: #fafbfe;
  color: #1e293b;
`;

const EntryTop = styled.div`
  display: flex;
  align-items: center;
  height: 24px;
  b { font-size: 18px; }
  time {
    display: flex;
    align-items: center;
    gap: 8px;
    margin-left: auto;
    color: #64748b;
  }
`;

const Badge = styled.span`
  display: grid;
  place-items: center;
  width: 76px;
  height: 22px;
  margin-left: 7px;
  border-radius: 11px;
  background: #dcfce7;
  color: #166534;
  font-size: 11px;
  font-weight: 600;
`;

const Note = styled.div`
  height: 72px;
  margin-top: 15px;
  padding: 14px 15px 0;
  border-radius: 8px;
  background: #f1f5f9;
  color: #334155;
  em { display: block; margin-top: 7px; color: #475569; }
`;

const EntryFoot = styled.div`
  display: flex;
  align-items: center;
  justify-content: space-between;
  height: 49px;
  margin-top: 15px;
  border-top: 1px solid #e2e8f0;
  a {
    display: flex;
    align-items: center;
    gap: 8px;
    color: #4f46e5;
    font-weight: 600;
    text-decoration: none;
  }
`;

const Pill = styled.span`
  display: flex;
  align-items: center;
  justify-content: center;
  gap: 8px;
  width: 120px;
  height: 27px;
  border-radius: 14px;
  background: #6b21a8;
  color: #fff;
  font-size: 11px;
`;

function JarEntry({ ago, note, from }: { ago: string; note?: string; from?: string }) {
  return (
    <Entry>
      <EntryTop>
        <b>0.0069 ETH</b>
        <Badge>CLAIMED</Badge>
        <time><Clock size={15} strokeWidth={1.8} />{ago}</time>
      </EntryTop>
      {note && (
        <Note>
          <Head $gap={8}><MessageSquare size={17} color="#6366f1" /><b>Note</b></Head>
          <em>"{note}"</em>
        </Note>
      )}
      {from && (
        <EntryFoot>
          <Pill><User size={13} />{from}</Pill>
          <a href="#etherscan"><ExternalLink size={15} />Etherscan</a>
        </EntryFoot>
      )}
    </Entry>
  );
}

function CookieJarPage() {
  return (
    <Browser url="cookiejar.allo.capital" bar={78} bg="#f2f3f5">
      <Jar>
        <BalanceCard $pad="24px 22px 20px" $after={16}>
          <Head>
            <Cookie size={17} color="#d97706" />
            <CardTitle $size={15}>Cookie Jar Balance</CardTitle>
            <a href="#explorer">View on Explorer <ExternalLink size={14} /></a>
          </Head>
          <Balance>0.0186 ETH</Balance>
        </BalanceCard>
        <Card $pad="23px 22px 18px" $after={22}>
          <Head>
            <Gift size={17} color="#16a34a" />
            <CardTitle $size={15}>Withdrawal Terms</CardTitle>
          </Head>
          <Terms>
            <div><dt>Claim Amount:</dt><dd><b>0.0069 ETH</b></dd></div>
            <div><dt>Claim Frequency:</dt><dd>Every 30 day</dd></div>
            <div><dt>Minimum Note:</dt><dd>20 characters</dd></div>
          </Terms>
        </Card>
        <Card $pad="19px 22px 22px" $after={22}>
          <CardTitle $size={13}>The Cookie Jar</CardTitle>
          <Muted $top={2}>Connect your wallet to check eligibility</Muted>
          <Notice>
            <Wallet size={15} />
            <p>
              <strong>Not Connected</strong>
              <br />
              Please connect your wallet using the button above to continue
            </p>
          </Notice>
        </Card>
        <History>
          <HistoryHead>
            <Head $gap={13}>
              <FileText size={20} color="#4f46e5" />
              <CardTitle $size={13}>Withdrawal History</CardTitle>
            </Head>
            <Muted $top={6}>Comprehensive record of all withdrawals and associated messages</Muted>
          </HistoryHead>
          <Entries>
            <JarEntry ago="19 days ago" note="Buying books on finance" from="0xa469...3c83" />
            <JarEntry ago="27 days ago" />
          </Entries>
        </History>
      </Jar>
    </Browser>
  );
}

/* ---------- page ---------- */

export default function App() {
  return (
    <>
      <GlobalStyle />
      <Board>
        <PhoneRow $columns="781px 781px 527px" $start={152}>
          <Preferences />
          <CreateEndeavor />
          <Assets />
        </PhoneRow>
        <ArrowRow $height={356} $start={669}>
          <ZigArrow top={100} />
          <CurlArrow top={60} gap={296} />
          <ZigArrow top={115} gap={341} mirrored />
        </ArrowRow>
        <PhoneRow $columns="506px 580px 405px 629px 370px" $start={427}>
          <WaveArrow />
          <Bet title="Allo Capital IRL" text={irlText} site="irl.allo.capital" up={rally} />
          <WaveArrow />
          <Bet
            title="Allo Capital Cookie Jar"
            text="Get rewards for Allo Capital DAO contributions"
            site="cookiejar.allo.capital"
            up={flat}
          />
          <WaveArrow />
        </PhoneRow>
        <ArrowRow $height={341} $start={1153}>
          <CurlArrow top={57} down />
          <CurlArrow top={61} gap={890} down />
        </ArrowRow>
        <PhoneRow $columns="982px 527px" $start={933}>
          <IrlPage />
          <CookieJarPage />
        </PhoneRow>
      </Board>
    </>
  );
}
